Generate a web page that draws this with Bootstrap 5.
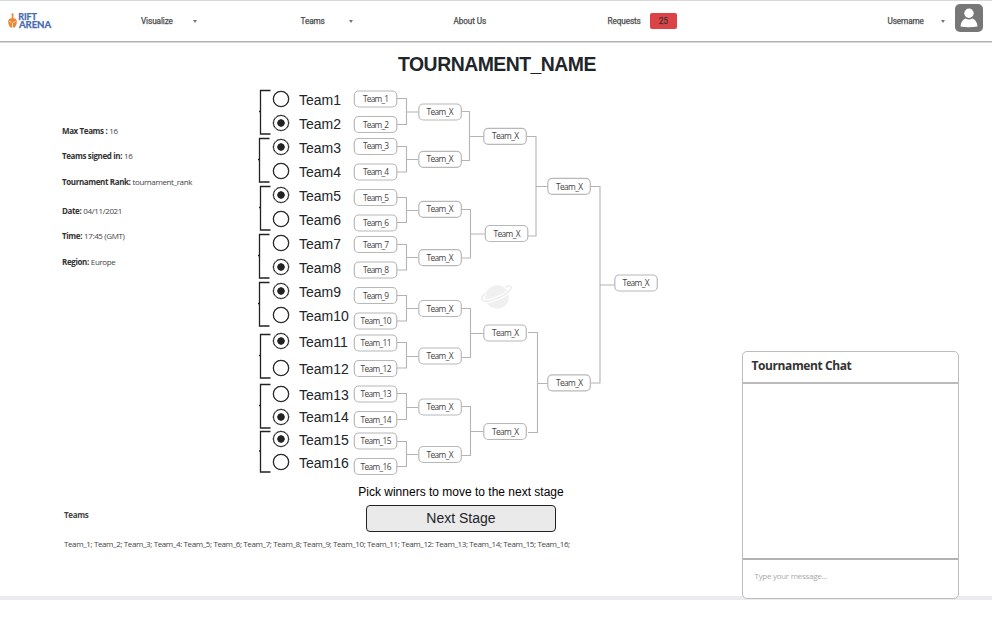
<!DOCTYPE html>
<html lang="en">
<head>
<meta charset="utf-8">
<meta name="viewport" content="width=device-width, initial-scale=1">
<title>Rift Arena - Tournament</title>
<link href="https://cdn.jsdelivr.net/npm/bootstrap@5.3.0/dist/css/bootstrap.min.css" rel="stylesheet">
<style>
body{font-family:"Liberation Sans",Arial,sans-serif;color:#212529;background:#fff;overflow:hidden}
.top-nav{height:42px;border-top:1px solid #d9d9dc;border-bottom:1px solid #b3b3b3;box-shadow:0 1px 0 #d8d8d8;font:400 8.2px/12px Roboto,sans-serif;color:#444;
 grid-template-columns:141px 159.5px 153px 154px 280px 1fr;letter-spacing:-.1px;-webkit-text-stroke:.25px #555}
.tri{width:0;height:0;border:2px solid transparent;border-top:3px solid #777;border-bottom:0;margin-left:20px}
.tri-teams{margin-left:24px}
.tri-user{margin-left:17px}
.avatar{margin:0 0 6px 10.5px}
.req-badge{width:27px;height:16px;line-height:16px;border-radius:2px;background:#dc4346;color:#2c1517;margin-left:9px}
.page-area{height:558px;border-bottom:4px solid #ececf0}
.title{height:43px;font-size:19.4px;line-height:24px;padding-top:10px;padding-left:2px;letter-spacing:-.5px}
.left-part{width:742px}
.stage-row{height:389px}
.meta,.team-names{font-family:"Open Sans","Noto Sans",sans-serif;font-size:8px;color:#444}
.meta{width:258px;padding:38.5px 0 0 62px}
.meta dl>div{height:25.6px;line-height:14px;white-space:nowrap;gap:2px;letter-spacing:-.38px}
.meta dl>div:nth-child(3){height:29px}
.meta dt{color:#333;font-weight:700}
.picks{width:96px;padding-top:2px}
.pair{height:48px}
.pair svg{width:14px;height:46px;flex:none;margin:1.500px 1.500px 0 -1.500px}
.pair.out svg{margin-left:0;margin-right:0}
.pair label{height:24px;font-size:14px;line-height:24px;white-space:nowrap}
.pair input{appearance:none;width:16px;height:16px;flex:none;border:1.6px solid #222;border-radius:50%;margin:0 10px 0 1px;background:#fff;box-shadow:0 0 0 .3px #222}
.pair input:checked{background:radial-gradient(circle,#222 3.4px,transparent 4px)}
.pair span{padding-top:2px}
.pair.p5{height:49px}
.pair.p6{height:54.5px}.p6 label{height:26.5px;line-height:26.5px}.pair.p6 svg{margin-top:4.5px}
.pair.p7{height:45.5px}.p7 label,.p8 label{height:22.8px;line-height:22.8px}.pair.p7 svg{margin-top:.5px}.pair.p8 svg{margin-top:2px}
.bracket{width:388px;height:389px;flex:none;overflow:visible}
.bracket text{font:8.4px "Open Sans","Noto Sans",sans-serif;fill:#444;text-anchor:middle}
.bracket .wires{fill:none;stroke:#b4b4b4;stroke-width:1.1}
.teams-head{width:318px;padding:34px 0 0 64px;line-height:14px;letter-spacing:-.35px}
.pick-col{width:190px;font-size:12px;line-height:16px;color:#000;padding-top:10px}
.pick-col .hint{margin:0 -10px 5px}
.next-btn{height:27px;line-height:25px;font-size:14px;background:#eaeaea;border:1px solid #222;border-radius:4px;color:#212529}
.all-teams{padding:5px 0 0 64px;line-height:14px;letter-spacing:-.39px}
.chat{width:217px;height:248px;border:1px solid #bdbdbd;border-radius:5px;margin-bottom:-3px;font-family:"Open Sans","Noto Sans",sans-serif;z-index:1}
.chat h2{height:32px;border-bottom:2px solid #bbb;font-size:12px;line-height:28px;padding-left:8.5px;color:#333;letter-spacing:-.4px}
.chat .entry{height:40px;border-top:2px solid #b3b3b3;font-size:8px;line-height:31px;padding-left:11.5px;color:#aaa;letter-spacing:-.28px}
</style>
<script src="https://cdn.jsdelivr.net/npm/bootstrap@5.3.0/dist/js/bootstrap.bundle.min.js"></script>
</head>
<body>
<header class="top-nav d-grid align-items-center">
 <svg width="52" height="20" viewBox="0 0 52 20" aria-label="Rift Arena">
  <path d="M11.500 2.500h2v4.600c2 .2 3.300 1.600 3.300 3.600 0 2.600-1 4.700-2.300 5.800h-4C9.200 15.400 8.200 13.300 8.200 10.700c0-2 1.300-3.400 3.300-3.600z" fill="#ee8434"/>
  <path d="M11 3.500v4.200M14.200 5v2.500M9.600 10.600l2 .7M15.400 10.600l-2 .7M12.500 12v4.500" fill="none" stroke="#fff" stroke-width=".8"/>
  <g font-family="Lato,sans-serif" font-weight="700" fill="#4669b2" stroke="#4669b2" stroke-width=".25"><text x="18.300" y="8.500" font-size="8.500" textLength="18.500" lengthAdjust="spacingAndGlyphs">RIFT</text><text x="19" y="17.300" font-size="8.500" textLength="32" lengthAdjust="spacingAndGlyphs">ARENA</text></g>
 </svg>
 <div class="d-flex align-items-center"><span>Visualize</span><i class="tri"></i></div>
 <div class="d-flex align-items-center"><span>Teams</span><i class="tri tri-teams"></i></div>
 <div>About Us</div>
 <div class="d-flex align-items-center"><span>Requests</span><span class="req-badge text-center">25</span></div>
 <div class="d-flex align-items-center"><span>Username</span><i class="tri tri-user"></i>
  <svg class="avatar" width="28" height="28" viewBox="0 0 28 28"><rect width="28" height="28" rx="5" fill="#777"/><circle cx="14" cy="9.300" r="4.700" fill="#fff"/><path d="M5.500 22.500c.3-4.500 2.500-7 5-8q3.500 2 7 0c2.500 1 4.700 3.500 5 8q-8.500 1.500-17 0z" fill="#fff"/></svg>
 </div>
</header>
<main class="page-area d-flex flex-column">
 <h1 class="title fw-bold text-center m-0">TOURNAMENT_NAME</h1>
 <div class="d-flex flex-grow-1">
  <div class="left-part">
   <div class="stage-row d-flex">
    <section class="meta"><dl class="m-0">
     <div class="d-flex"><dt>Max Teams :</dt><dd class="m-0">16</dd></div>
     <div class="d-flex"><dt>Teams signed in:</dt><dd class="m-0">16</dd></div>
     <div class="d-flex"><dt>Tournament Rank:</dt><dd class="m-0">tournament_rank</dd></div>
     <div class="d-flex"><dt>Date:</dt><dd class="m-0">04/11/2021</dd></div>
     <div class="d-flex"><dt>Time:</dt><dd class="m-0">17:45 (GMT)</dd></div>
     <div class="d-flex"><dt>Region:</dt><dd class="m-0">Europe</dd></div>
    </dl></section>
    <form class="picks">
     <div class="pair out d-flex"><svg viewBox="0 0 14 46"><use href="#pairMark"/></svg><div><label class="d-flex align-items-center"><input type="radio" name="m1"><span>Team1</span></label><label class="d-flex align-items-center"><input type="radio" name="m1" checked><span>Team2</span></label></div></div>
     <div class="pair d-flex"><svg viewBox="0 0 14 46"><use href="#pairMark"/></svg><div><label class="d-flex align-items-center"><input type="radio" name="m2" checked><span>Team3</span></label><label class="d-flex align-items-center"><input type="radio" name="m2"><span>Team4</span></label></div></div>
     <div class="pair out d-flex"><svg viewBox="0 0 14 46"><use href="#pairMark"/></svg><div><label class="d-flex align-items-center"><input type="radio" name="m3" checked><span>Team5</span></label><label class="d-flex align-items-center"><input type="radio" name="m3"><span>Team6</span></label></div></div>
     <div class="pair d-flex"><svg viewBox="0 0 14 46"><use href="#pairMark"/></svg><div><label class="d-flex align-items-center"><input type="radio" name="m4"><span>Team7</span></label><label class="d-flex align-items-center"><input type="radio" name="m4" checked><span>Team8</span></label></div></div>
     <div class="pair p5 d-flex"><svg viewBox="0 0 14 46"><use href="#pairMark"/></svg><div><label class="d-flex align-items-center"><input type="radio" name="m5" checked><span>Team9</span></label><label class="d-flex align-items-center"><input type="radio" name="m5"><span>Team10</span></label></div></div>
     <div class="pair out p6 d-flex"><svg viewBox="0 0 14 46"><use href="#pairMark"/></svg><div><label class="d-flex align-items-center"><input type="radio" name="m6" checked><span>Team11</span></label><label class="d-flex align-items-center"><input type="radio" name="m6"><span>Team12</span></label></div></div>
     <div class="pair out p7 d-flex"><svg viewBox="0 0 14 46"><use href="#pairMark"/></svg><div><label class="d-flex align-items-center"><input type="radio" name="m7"><span>Team13</span></label><label class="d-flex align-items-center"><input type="radio" name="m7" checked><span>Team14</span></label></div></div>
     <div class="pair out p8 d-flex"><svg viewBox="0 0 14 46"><path d="M12.500 1.500H2.500v40.500H12.500M1 21h1" fill="none" stroke="#222" stroke-width="1.300"/></svg><div><label class="d-flex align-items-center"><input type="radio" name="m8" checked><span>Team15</span></label><label class="d-flex align-items-center"><input type="radio" name="m8"><span>Team16</span></label></div></div>
    </form>
    <svg class="bracket" viewBox="354 85 388 389">
     <defs>
      <path id="pairMark" d="M12.500 1.500H2.500v43.500H12.500M1 22.500h1" fill="none" stroke="#222" stroke-width="1.300"/>
      <rect id="slot" x="-21.200" y="-8" width="42.500" height="16" rx="4.500" fill="#fff" stroke="#b8b8b8" stroke-width="1.200"/>
     </defs>
     <g class="wires">
      <path d="M397 98.500h9.500v26H397M406.500 112H418M397 146.500h9.500v25.500H397M406.500 159.500H418M397 197.500h9.500v25H397M406.500 210.500H418M397 244.500h9.500v25.500H397M406.500 257.500H418"/>
      <path d="M397 295.500h9.500v25.500H397M406.500 308.500H418M397 342.500h9.500v25.500H397M406.500 356.500H418M397 393.500h9.500v26H397M406.500 407.500H418M397 441.500h9.500v25H397M406.500 454.500H418"/>
      <path d="M461 111.500h8.500v49H461M469.500 136.500H484M461 209.500h9.500v48.500H461M470.500 234H485M461 308.500h9.500v49H461M470.500 333.500H484M461 406.500h9.500v49H461M470.500 431.500H484"/>
      <path d="M526 136.500h10v99.500h-8M536 186.500h12M528 332.500h9.500v100H528M537.500 383.500H548M590 186.500h10V383h-10M600 285H615"/>
     </g>
     <use href="#slot" x="375.500" y="99"/><use href="#slot" x="375.500" y="124.500"/><use href="#slot" x="375.500" y="146.500"/><use href="#slot" x="375.500" y="172"/><use href="#slot" x="375.500" y="197.500"/><use href="#slot" x="375.500" y="223"/><use href="#slot" x="375.500" y="244.500"/><use href="#slot" x="375.500" y="270"/>
     <use href="#slot" x="375.500" y="295.500"/><use href="#slot" x="375.500" y="321"/><use href="#slot" x="375.500" y="343"/><use href="#slot" x="375.500" y="368.500"/><use href="#slot" x="375.500" y="394"/><use href="#slot" x="375.500" y="419.500"/><use href="#slot" x="375.500" y="441"/><use href="#slot" x="375.500" y="466.500"/>
     <use href="#slot" x="440" y="112"/><use href="#slot" x="440" y="159.300"/><use href="#slot" x="440" y="209.300"/><use href="#slot" x="440" y="257.700"/><use href="#slot" x="440" y="308.500"/><use href="#slot" x="440" y="356"/><use href="#slot" x="440" y="407"/><use href="#slot" x="440" y="454.500"/>
     <use href="#slot" x="505" y="136.300"/><use href="#slot" x="506.500" y="233.500"/><use href="#slot" x="505" y="333"/><use href="#slot" x="505" y="431.500"/>
     <use href="#slot" x="569" y="186.300"/><use href="#slot" x="569" y="382.800"/><use href="#slot" x="636" y="283"/>
     <g>
      <text x="376" y="102" textLength="26">Team_1</text><text x="376" y="127.500" textLength="26">Team_2</text><text x="376" y="149" textLength="26">Team_3</text><text x="376" y="175" textLength="26">Team_4</text><text x="376" y="200.500" textLength="26">Team_5</text><text x="376" y="225.500" textLength="26">Team_6</text><text x="376" y="247.500" textLength="26">Team_7</text><text x="376" y="273" textLength="26">Team_8</text>
      <text x="376" y="298.500" textLength="26">Team_9</text><text x="376" y="324" textLength="31">Team_10</text><text x="376" y="346" textLength="31">Team_11</text><text x="376" y="371.500" textLength="31">Team_12</text><text x="376" y="397" textLength="31">Team_13</text><text x="376" y="422.500" textLength="31">Team_14</text><text x="376" y="444" textLength="31">Team_15</text><text x="376" y="469.500" textLength="31">Team_16</text>
      <text x="440" y="115" textLength="27">Team_X</text><text x="440" y="162" textLength="27">Team_X</text><text x="440" y="212" textLength="27">Team_X</text><text x="440" y="261" textLength="27">Team_X</text><text x="440" y="311.500" textLength="27">Team_X</text><text x="440" y="359" textLength="27">Team_X</text><text x="440" y="410" textLength="27">Team_X</text><text x="440" y="457.500" textLength="27">Team_X</text>
      <text x="505.500" y="139" textLength="27">Team_X</text><text x="507" y="236.500" textLength="27">Team_X</text><text x="505.500" y="336" textLength="27">Team_X</text><text x="505.500" y="434.500" textLength="27">Team_X</text>
      <text x="569.500" y="189.500" textLength="27">Team_X</text><text x="569.500" y="386" textLength="27">Team_X</text><text x="636" y="286" textLength="27">Team_X</text>
     </g>
     <g><circle cx="497" cy="297" r="11.800" fill="#f0f0f0"/><path d="M505 287c9-3 7.500 2.500-1 8-8.500 5.200-20.500 8.300-22 4.500-.7-1.800 1-4 3.500-6" fill="none" stroke="#fff" stroke-width="4"/><path d="M505 287c9-3 7.500 2.500-1 8-8.500 5.200-20.500 8.300-22 4.500-.7-1.800 1-4 3.500-6" fill="none" stroke="#efefef" stroke-width="1.900"/></g>
    </svg>
   </div>
   <div class="d-flex">
    <div class="team-names teams-head fw-bold flex-shrink-0">Teams</div>
    <div class="pick-col ms-5"><div class="text-nowrap text-center hint">Pick winners to move to the next stage</div><button class="next-btn d-block w-100 p-0" type="button">Next Stage</button></div>
   </div>
   <div class="team-names text-nowrap all-teams">Team_1; Team_2; Team_3; Team_4: Team_5; Team_6; Team_7; Team_8; Team_9; Team_10; Team_11; Team_12: Team_13; Team_14; Team_15; Team_16;</div>
  </div>
  <aside class="chat bg-white d-flex flex-column align-self-end flex-shrink-0">
   <h2 class="fw-bold m-0">Tournament Chat</h2><div class="flex-grow-1"></div><div class="entry">Type your message...</div>
  </aside>
 </div>
</main>
</body>
</html>
